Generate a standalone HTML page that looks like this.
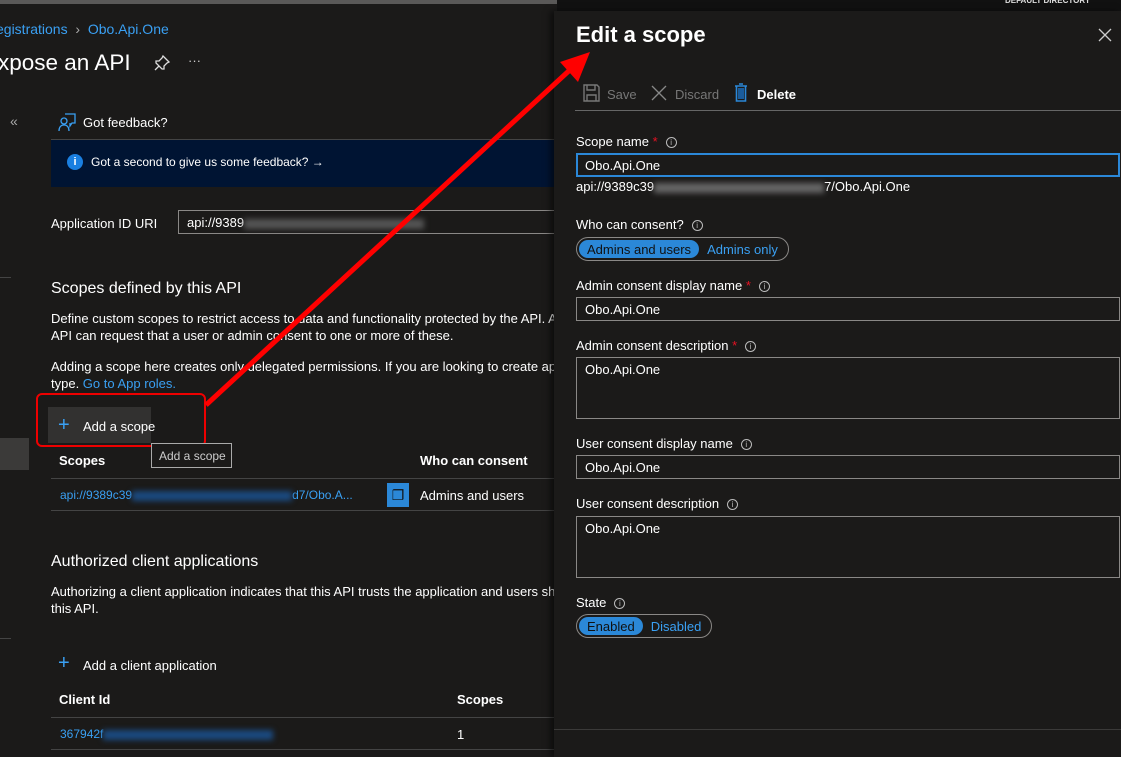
<!DOCTYPE html>
<html><head><style>
*{box-sizing:border-box;margin:0;padding:0}
body{width:1121px;height:757px;background:#1b1a19;font-family:"Liberation Sans",sans-serif;color:#fff;position:relative;overflow:hidden;font-size:13px}
.a{position:absolute;white-space:nowrap}
.blue{color:#3aa0f3}
.info{display:inline-block;width:11px;height:11px;border:1px solid #bbb;border-radius:50%;font-size:8px;text-align:center;line-height:9px;color:#bbb;vertical-align:1px;margin-left:8px}
.star{color:#e81123}
.inp{position:absolute;left:576px;width:544px;border:1px solid #8a8886;height:24px;padding:4px 8px;font-size:13px}
.tog{position:absolute;left:576px;height:24px;border:1px solid #8a8886;border-radius:12px;padding:2px;display:flex;font-size:13px}
.tog span{padding:2px 8px;border-radius:10px;color:#3aa0f3}
.tog span.on{background:#2b88d8;color:#111}
.blur{display:inline-block;height:10px;background:#555;filter:blur(3px);vertical-align:middle}
</style></head><body>
<div class="a" style="left:0;top:0;width:557px;height:4px;background:#5a5958"></div>
<div class="a" style="left:557px;top:0;width:564px;height:11px;background:#111"></div>
<div class="a" style="left:1005px;top:-4px;font-size:8px;font-weight:bold;color:#ddd">DEFAULT DIRECTORY</div>

<div class="a blue" style="left:-4px;top:21px;font-size:14px">egistrations <span style="color:#aaa">&nbsp;›&nbsp;</span> Obo.Api.One</div>
<div class="a" style="left:-2px;top:50px;font-size:22.5px">xpose an API</div>
<svg class="a" style="left:153px;top:54px" width="18" height="18" viewBox="0 0 18 18" fill="none" stroke="#ddd" stroke-width="1.3"><path d="M10 2l6 6-2 1-3 3 0 3-2 0-6-6 0-2 3 0 3-3z M6 12l-4 4"/></svg>
<div class="a" style="left:188px;top:53px;color:#ccc">···</div>
<div class="a" style="left:10px;top:113px;color:#aaa;font-size:14px">«</div>
<div class="a" style="left:0;top:277px;width:11px;height:1px;background:#444"></div>
<div class="a" style="left:0;top:438px;width:29px;height:32px;background:#3b3a39"></div>
<div class="a" style="left:0;top:638px;width:11px;height:1px;background:#444"></div>

<svg class="a" style="left:57px;top:112px" width="20" height="20" viewBox="0 0 20 20" fill="none" stroke="#3aa0f3" stroke-width="1.3"><path d="M8 2h10v9h-3l-2 3v-3"/><circle cx="7" cy="9" r="3"/><path d="M2 19c0-4 2-6 5-6s5 2 5 6"/></svg>
<div class="a" style="left:83px;top:115px">Got feedback?</div>
<div class="a" style="left:51px;top:139px;width:506px;height:48px;background:#001433;border-top:1px solid #444"></div>
<div class="a" style="left:67px;top:154px;width:16px;height:16px;border-radius:50%;background:#1a7fe0;font-size:11px;font-weight:bold;text-align:center;line-height:16px">i</div>
<div class="a" style="left:91px;top:155px;font-size:12px">Got a second to give us some feedback? →</div>

<div class="a" style="left:51px;top:216px">Application ID URI</div>
<div class="a" style="left:178px;top:210px;width:380px;height:24px;border:1px solid #8a8886;padding:4px 8px">api://9389<span class="blur" style="width:180px"></span></div>

<div class="a" style="left:51px;top:280px;font-size:16px">Scopes defined by this API</div>
<div class="a" style="left:51px;top:310px;font-size:13px;line-height:17px">Define custom scopes to restrict access to data and functionality protected by the API. A<br>API can request that a user or admin consent to one or more of these.</div>
<div class="a" style="left:51px;top:358px;font-size:13px;line-height:17px">Adding a scope here creates only delegated permissions. If you are looking to create app<br>type. <span class="blue">Go to App roles.</span></div>

<div class="a" style="left:48px;top:407px;width:103px;height:36px;background:#323130"></div>
<div class="a" style="left:58px;top:414px;color:#3aa0f3;font-size:20px;font-weight:300">+</div>
<div class="a" style="left:83px;top:419px">Add a scope</div>
<div class="a" style="left:36px;top:393px;width:170px;height:54px;border:2px solid #e00;border-radius:6px"></div>
<div class="a" style="left:151px;top:443px;width:81px;height:25px;border:1px solid #aaa;background:#1b1a19;color:#ccc;font-size:12px;padding:5px 7px">Add a scope</div>

<div class="a" style="left:59px;top:453px;font-weight:bold">Scopes</div>
<div class="a" style="left:420px;top:453px;font-weight:bold">Who can consent</div>
<div class="a" style="left:51px;top:478px;width:506px;height:1px;background:#444"></div>
<div class="a blue" style="left:60px;top:488px;font-size:12px">api://9389c39<span class="blur" style="width:160px;background:#1b4a80"></span>d7/Obo.A...</div>
<div class="a" style="left:387px;top:483px;width:22px;height:24px;background:#2b88d8;font-size:14px;text-align:center;line-height:24px;color:#111">❐</div>
<div class="a" style="left:420px;top:488px">Admins and users</div>
<div class="a" style="left:51px;top:510px;width:506px;height:1px;background:#444"></div>

<div class="a" style="left:51px;top:553px;font-size:16px">Authorized client applications</div>
<div class="a" style="left:51px;top:583px;font-size:13px;line-height:17px">Authorizing a client application indicates that this API trusts the application and users sh<br>this API.</div>
<div class="a" style="left:58px;top:652px;color:#3aa0f3;font-size:20px">+</div>
<div class="a" style="left:83px;top:658px">Add a client application</div>
<div class="a" style="left:59px;top:692px;font-weight:bold">Client Id</div>
<div class="a" style="left:457px;top:692px;font-weight:bold">Scopes</div>
<div class="a" style="left:51px;top:717px;width:506px;height:1px;background:#444"></div>
<div class="a blue" style="left:60px;top:727px;font-size:12px">367942f<span class="blur" style="width:170px;background:#1b4a80"></span></div>
<div class="a" style="left:457px;top:727px">1</div>
<div class="a" style="left:51px;top:749px;width:506px;height:1px;background:#444"></div>

<!-- panel -->
<div class="a" style="left:554px;top:11px;width:567px;height:746px;background:#1b1a19;box-shadow:-4px 0 6px rgba(0,0,0,.5)"></div>
<div class="a" style="left:576px;top:22px;font-size:22px;font-weight:bold">Edit a scope</div>
<svg class="a" style="left:1098px;top:28px" width="14" height="14" viewBox="0 0 14 14" stroke="#ccc" stroke-width="1.3"><path d="M1 1l12 12M13 1L1 13"/></svg>
<svg class="a" style="left:583px;top:84px" width="17" height="18" viewBox="0 0 17 18" fill="none" stroke="#777" stroke-width="1.4"><path d="M1 1h13l2 2v14H1z M4 1v5h8V1 M4 17v-6h9v6"/></svg>
<div class="a" style="left:607px;top:87px;color:#777">Save</div>
<svg class="a" style="left:651px;top:85px" width="16" height="16" viewBox="0 0 16 16" stroke="#888" stroke-width="1.3"><path d="M1 1l14 14M15 1L1 15"/></svg>
<div class="a" style="left:675px;top:87px;color:#777">Discard</div>
<svg class="a" style="left:734px;top:83px" width="14" height="19" viewBox="0 0 14 19" fill="none" stroke="#2b88d8" stroke-width="1.6"><path d="M1 3h12M5 1h4M2.5 3v15h9V3"/><rect x="4" y="5" width="6" height="11" fill="#1a5c9c" stroke="none"/></svg>
<div class="a" style="left:757px;top:87px;font-weight:bold">Delete</div>
<div class="a" style="left:575px;top:110px;width:546px;height:1px;background:#666"></div>

<div class="a" style="left:576px;top:134px">Scope name <span class="star">*</span><span class="info">i</span></div>
<div class="inp" style="top:153px;border:2px solid #2b88d8;padding:3px 7px">Obo.Api.One</div>
<div class="a" style="left:576px;top:179px">api://9389c39<span class="blur" style="width:170px;background:#666"></span>7/Obo.Api.One</div>

<div class="a" style="left:576px;top:217px">Who can consent?<span class="info">i</span></div>
<div class="tog" style="top:237px"><span class="on">Admins and users</span><span>Admins only</span></div>

<div class="a" style="left:576px;top:278px">Admin consent display name <span class="star">*</span><span class="info">i</span></div>
<div class="inp" style="top:297px">Obo.Api.One</div>
<div class="a" style="left:576px;top:338px">Admin consent description <span class="star">*</span><span class="info">i</span></div>
<div class="inp" style="top:357px;height:62px">Obo.Api.One</div>
<div class="a" style="left:576px;top:436px">User consent display name<span class="info">i</span></div>
<div class="inp" style="top:455px">Obo.Api.One</div>
<div class="a" style="left:576px;top:496px">User consent description<span class="info">i</span></div>
<div class="inp" style="top:516px;height:62px">Obo.Api.One</div>
<div class="a" style="left:576px;top:595px">State<span class="info">i</span></div>
<div class="tog" style="top:614px"><span class="on">Enabled</span><span>Disabled</span></div>
<div class="a" style="left:554px;top:729px;width:567px;height:1px;background:#3b3a39"></div>

<svg class="a" style="left:0;top:0" width="1121" height="757">
<line x1="206" y1="405" x2="572" y2="68" stroke="#f00" stroke-width="5"/>
<polygon points="590,52 560,62 578,82" fill="#f00"/>
</svg>
</body></html>
